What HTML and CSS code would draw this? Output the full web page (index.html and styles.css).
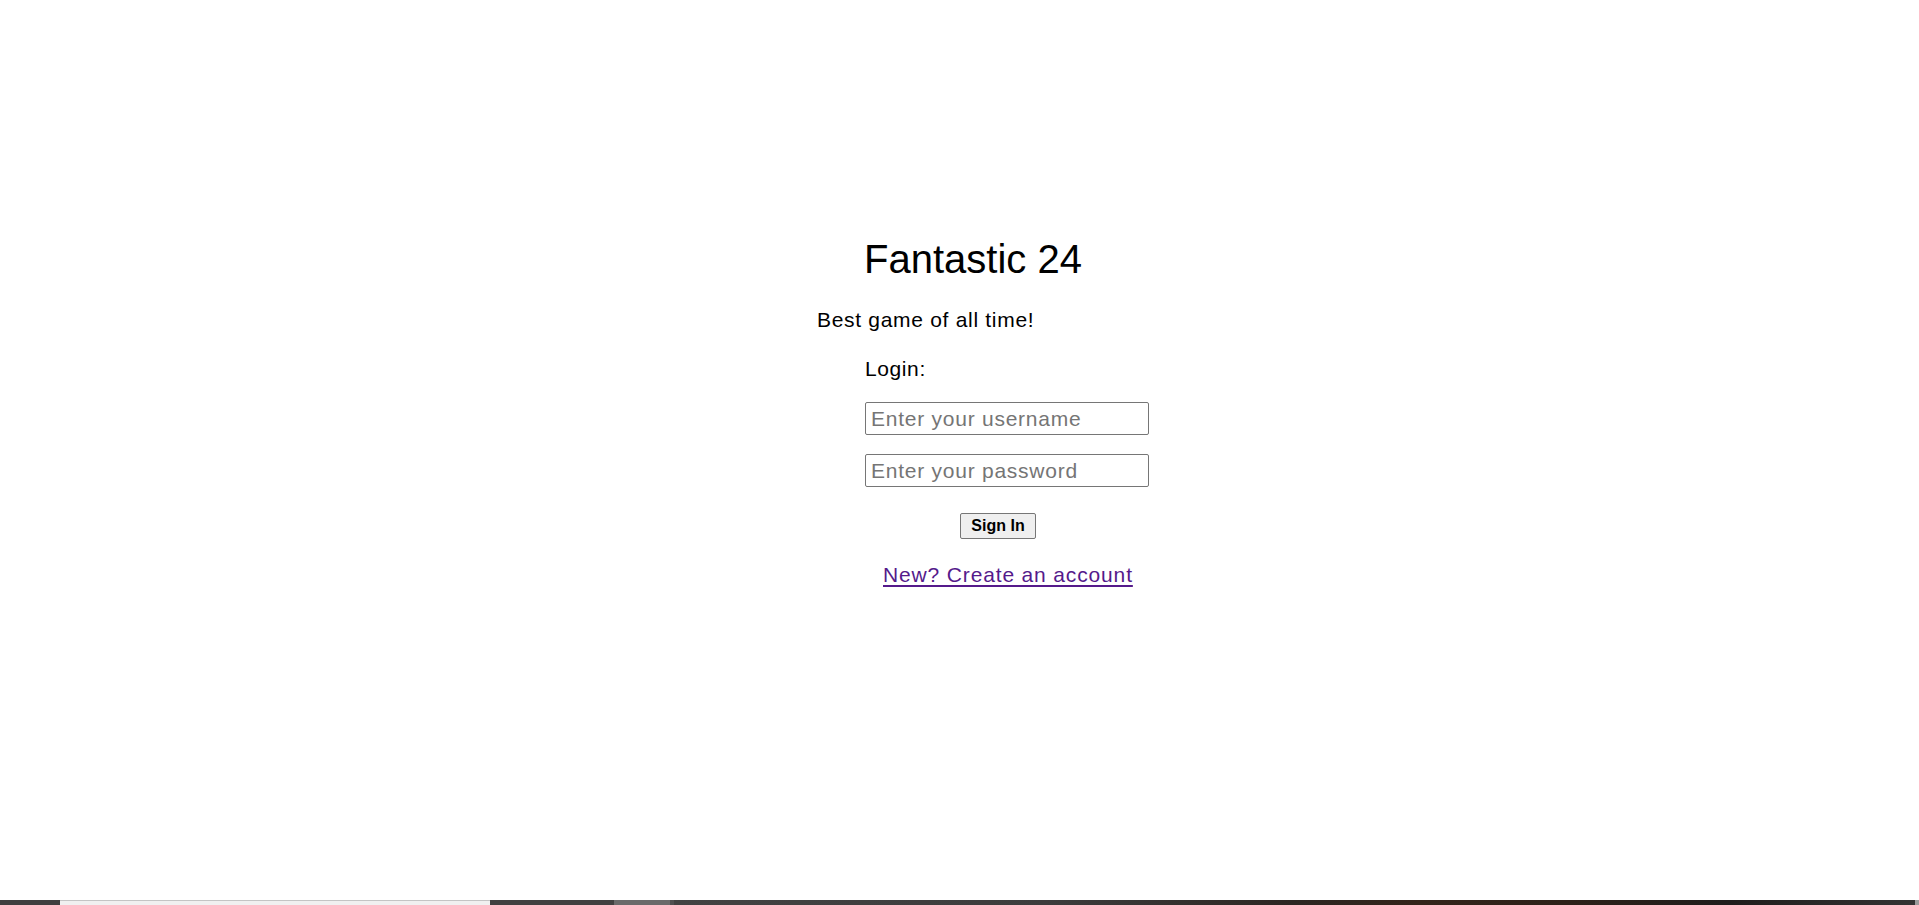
FILE: index.html
```html
<!DOCTYPE html>
<html lang="en">
<head>
<meta charset="utf-8">
<title>Fantastic 24</title>
<link rel="stylesheet" href="styles.css">
</head>
<body>
<div class="page">
  <main class="login">
    <h1 class="title">Fantastic 24</h1>
    <p class="tagline">Best game of all time!</p>
    <form class="form" onsubmit="return false;">
      <label class="form-label">Login:</label>
      <input class="field" type="text" placeholder="Enter your username">
      <input class="field field-pass" type="password" placeholder="Enter your password">
      <button class="btn" type="submit">Sign In</button>
    </form>
    <a class="signup" href="#">New? Create an account</a>
  </main>
  <div class="taskbar">
    <div class="tb-a"></div>
    <div class="tb-b"></div>
    <div class="tb-c"></div>
    <div class="tb-d"></div>
    <div class="tb-e"></div>
  </div>
</div>
</body>
</html>
```
FILE: styles.css
```css
html, body {
  margin: 0;
  padding: 0;
  background: #ffffff;
}

body {
  font-family: "Liberation Sans", Arial, sans-serif;
  color: #000000;
}

.page {
  display: flex;
  flex-direction: column;
  min-height: 100vh;
}

.login {
  flex: 1;
  width: 285px;
  margin: 0 auto;
  padding-top: 236px;
  display: flex;
  flex-direction: column;
  align-items: flex-start;
}

.title {
  margin: 0 0 0 47px;
  font-size: 40px;
  line-height: 46px;
  font-weight: normal;
  letter-spacing: 0;
  white-space: nowrap;
}

.tagline {
  margin: 26px 0 0 0;
  font-size: 21px;
  line-height: 24px;
  letter-spacing: 0.7px;
  white-space: nowrap;
}

.form {
  display: flex;
  flex-direction: column;
  align-items: flex-start;
  margin: 25px 0 0 48px;
}

.form-label {
  font-size: 21px;
  line-height: 24px;
  letter-spacing: 0.6px;
}

.field {
  box-sizing: border-box;
  width: 284px;
  height: 33px;
  margin-top: 21px;
  padding: 0 5px;
  border: 1px solid #767676;
  border-radius: 2px;
  font-family: "Liberation Sans", Arial, sans-serif;
  font-size: 21px;
  letter-spacing: 0.75px;
  color: #000;
  background: #fff;
}

.field::placeholder {
  color: #757575;
}

.field-pass {
  margin-top: 19px;
}

.btn {
  box-sizing: border-box;
  margin: 26px 0 0 95px;
  width: 76px;
  height: 26px;
  padding: 0;
  border: 1px solid #767676;
  border-radius: 2px;
  background: #efefef;
  font-family: "Liberation Sans", Arial, sans-serif;
  font-size: 16px;
  font-weight: bold;
  color: #000;
}

.signup {
  margin: 24px 0 0 66px;
  font-size: 21px;
  line-height: 24px;
  letter-spacing: 0.85px;
  color: #551a8b;
  text-decoration: underline;
  text-underline-offset: 3px;
  white-space: nowrap;
}

.taskbar {
  height: 5px;
  display: flex;
}

.tb-a {
  width: 60px;
  background: #3f3f3f;
}

.tb-b {
  width: 430px;
  background: #f0f0f0;
  border-top: 1px solid #c4c4c4;
  box-sizing: border-box;
}

.tb-c {
  width: 124px;
  background: #414141;
}

.tb-d {
  width: 56px;
  background: #6a6a6a;
  border-right: 4px solid #505050;
}

.tb-e {
  flex: 1;
  background: linear-gradient(90deg, #424242 0%, #3c3c3c 30%, #2c2622 50%, #33241a 60%, #2d2119 72%, #1f1d1c 85%, #333333 100%);
  border-right: 4px solid #9a9a9a;
}
```
